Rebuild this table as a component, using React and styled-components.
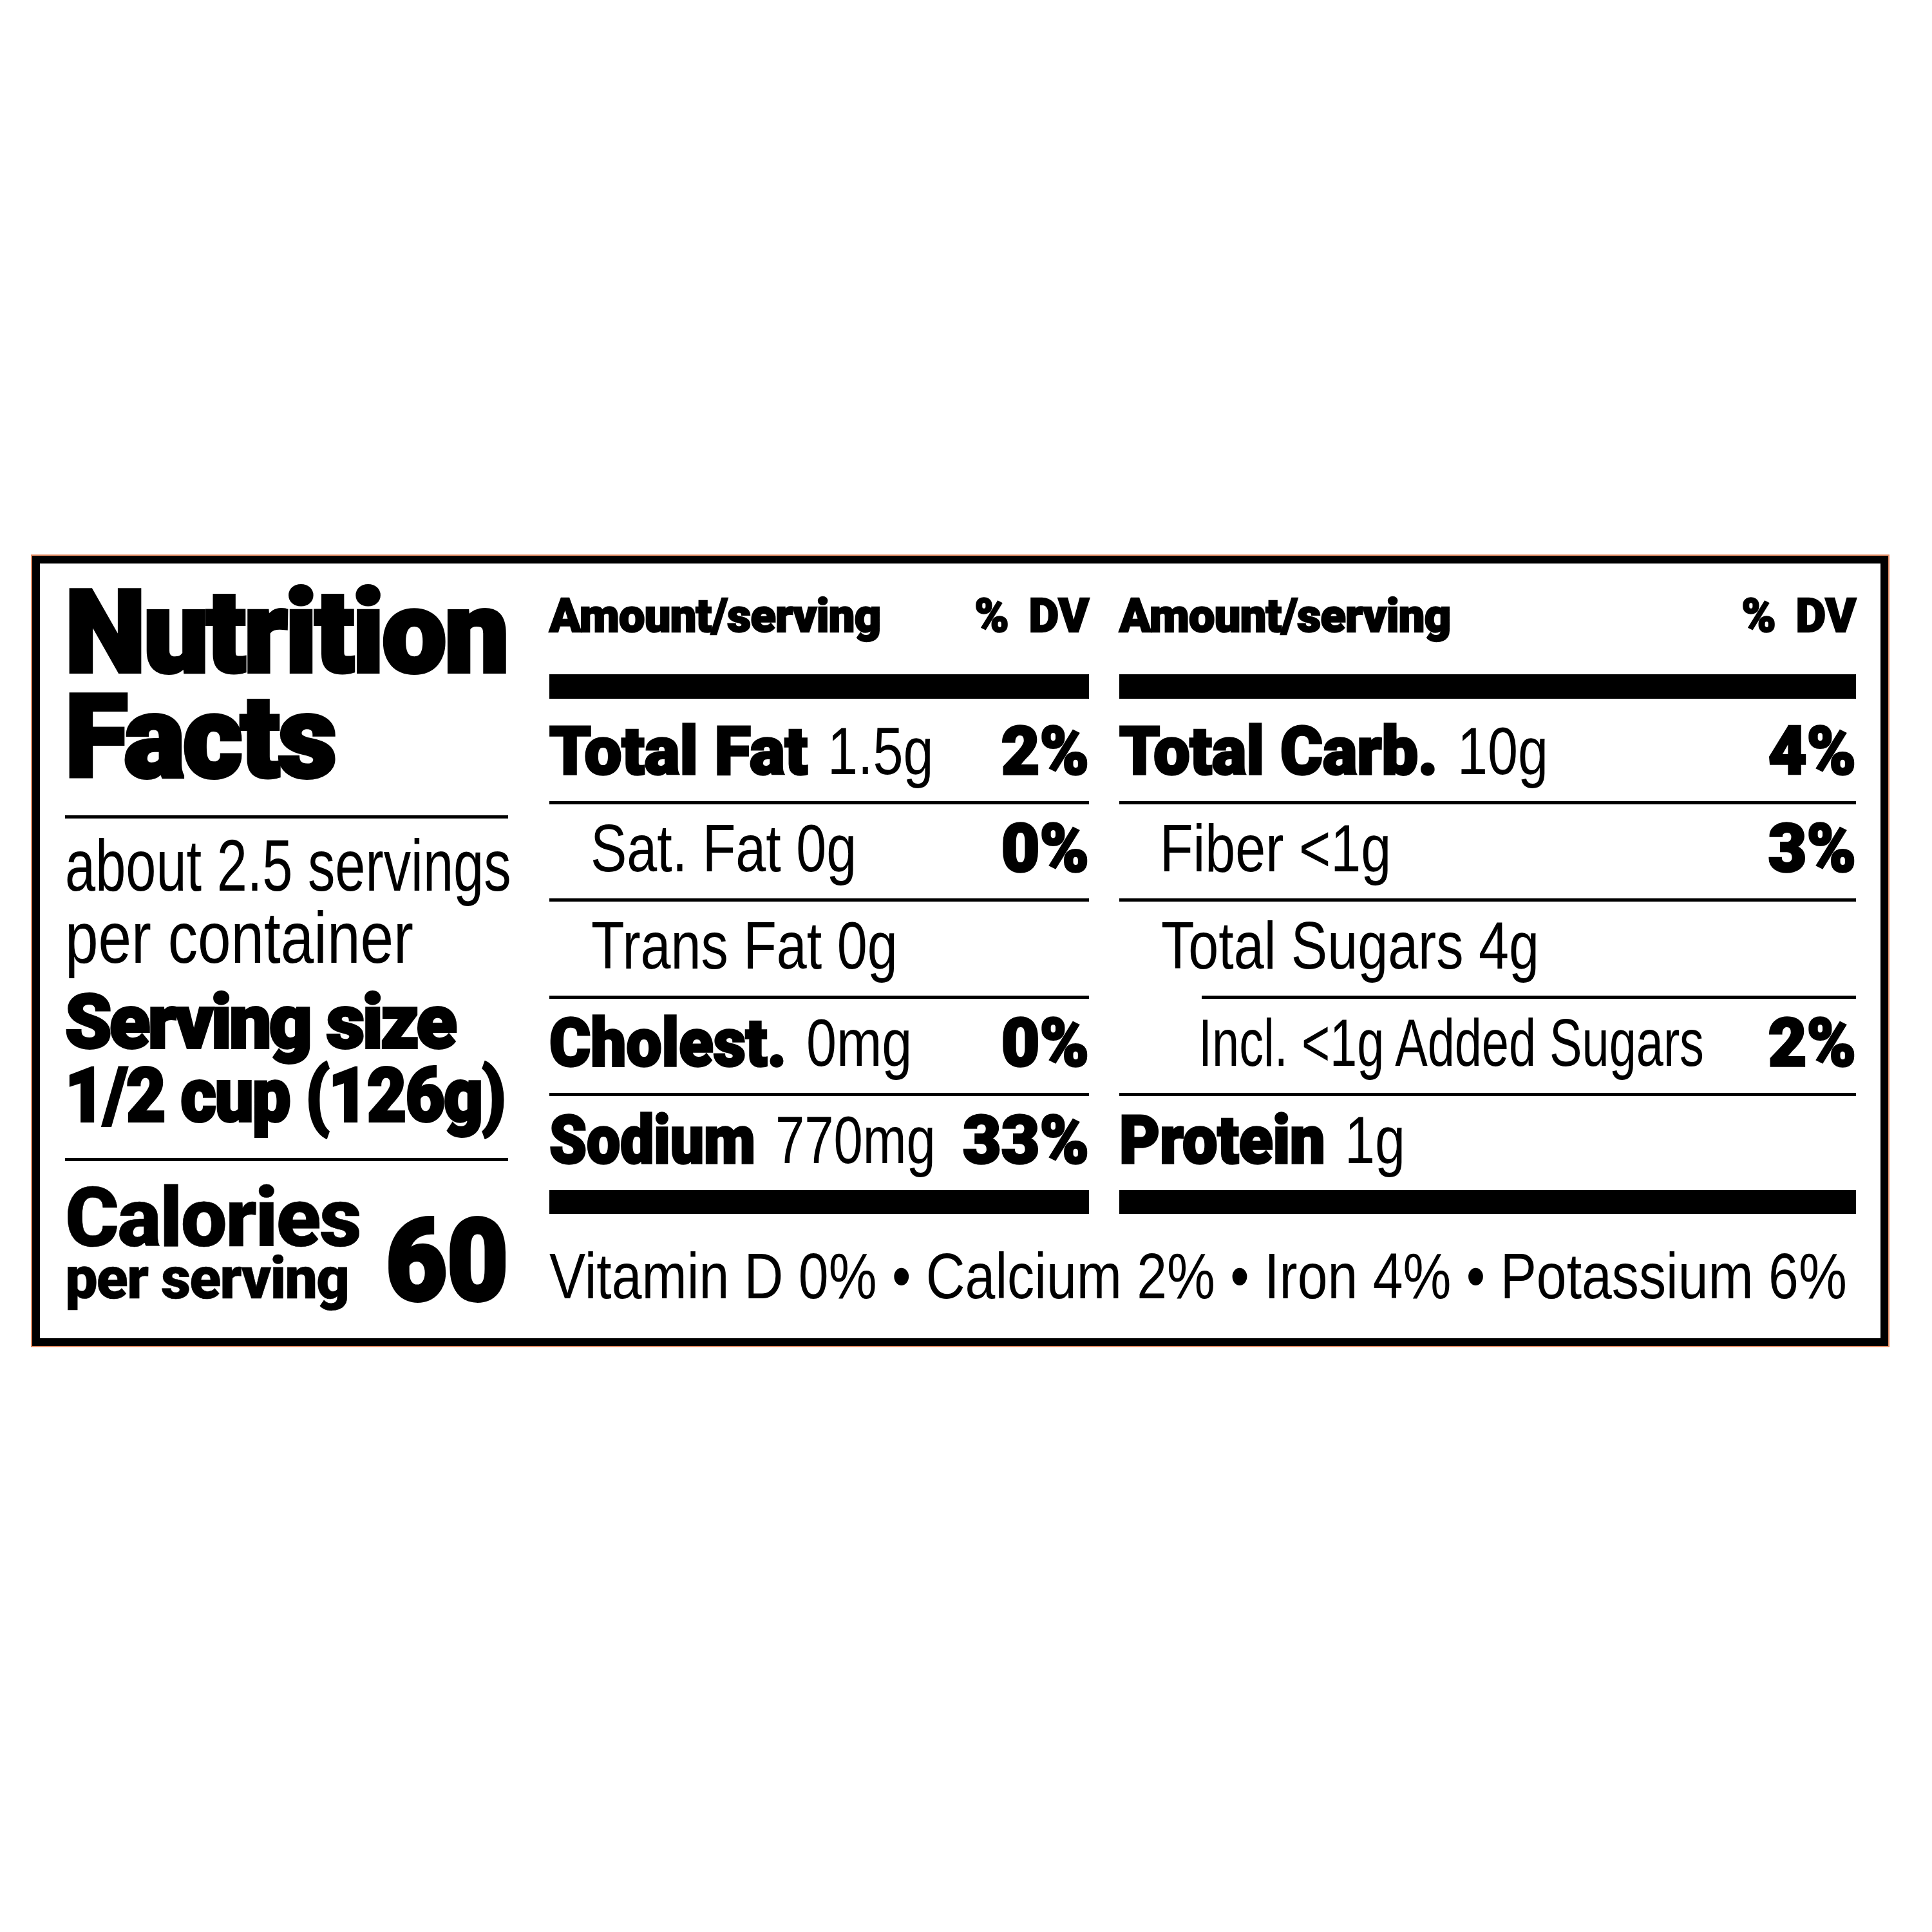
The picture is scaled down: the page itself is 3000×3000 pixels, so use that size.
import React from "react";
import styled, { createGlobalStyle, css } from "styled-components";

const BOLD = `"Roboto", "Liberation Sans", Arial, sans-serif`;
const REG = `"Liberation Sans", Arial, sans-serif`;

const heavy = css`
  font-family: ${BOLD};
  font-weight: 900;
  -webkit-text-stroke: 0.034em #000;
`;

const Global = createGlobalStyle`
  html, body { margin: 0; padding: 0; background: #fff; }
  body { font-family: ${REG}; color: #000; }
`;

const Page = styled.div`
  width: 3000px;
  min-height: 3000px;
  box-sizing: border-box;
  padding: 863px 0 0 50px;
`;

const Label = styled.section`
  box-sizing: border-box;
  width: 2882px;
  border: 12px solid #000;
  box-shadow: 0 0 0 2px #e38c64;
  padding: 24px 38px 0 39px;
  display: flex;
  gap: 64px;
  background: #fff;
`;

const LeftCol = styled.div`
  width: 688px;
  flex: none;
  display: flex;
  flex-direction: column;
`;

const Line = styled.span`
  display: block;
  letter-spacing: ${(p) => p.$ls || 0}px;
  transform: scaleX(${(p) => p.$sx || 1});
  transform-origin: left center;
`;

const Title = styled.h1`
  margin: 2px 0 0;
  ${heavy};
  font-size: 178px;
  line-height: 163px;
  white-space: nowrap;
`;

const Rule = styled.div`
  height: ${(p) => p.$h || 5}px;
  background: #000;
  margin-top: ${(p) => p.$top || 0}px;
  margin-left: ${(p) => p.$indent || 0}px;
  margin-bottom: ${(p) => p.$bottom || 0}px;
  flex: none;
`;

const Servings = styled.p`
  margin: 17px 0 0;
  font: 400 113px/112px ${REG};
  white-space: nowrap;
`;

const ServingSize = styled.p`
  margin: 18px 0 0;
  ${heavy};
  font-size: 116px;
  line-height: 114px;
  white-space: nowrap;
`;

const CaloriesRow = styled.div`
  display: flex;
  justify-content: space-between;
  align-items: flex-start;
`;

const CalStack = styled.div`
  display: flex;
  flex-direction: column;
  margin-top: 28px;
  ${heavy};
  white-space: nowrap;
`;

const CalWord = styled.span`
  font-size: 128px;
  line-height: 120px;
  letter-spacing: -2.5px;
`;

const PerServing = styled.span`
  font-size: 90px;
  line-height: 70px;
  letter-spacing: -1.8px;
`;

const CalNumber = styled.span`
  margin-top: 80px;
  ${heavy};
  font-size: 176px;
  line-height: 150px;
  transform: scaleX(0.93);
  transform-origin: right center;
`;

const RightArea = styled.div`
  width: 2029px;
  flex: none;
  display: flex;
  flex-direction: column;
`;

const Columns = styled.div`
  display: grid;
  grid-template-columns: 838px 1144px;
  column-gap: 47px;
`;

const Column = styled.div`
  display: flex;
  flex-direction: column;
`;

const Header = styled.div`
  display: flex;
  justify-content: space-between;
  align-items: baseline;
  ${heavy};
  font-size: 72px;
  line-height: 116px;
  white-space: nowrap;
`;

const HeaderAmount = styled.span`
  letter-spacing: -0.7px;
`;

const HeaderDV = styled.span`
  word-spacing: 0.18em;
`;

const Row = styled.div`
  display: flex;
  align-items: baseline;
  justify-content: space-between;
  padding: 0 0 9px ${(p) => p.$indent || 0}px;
  ${heavy};
  font-size: 103px;
  line-height: 137px;
  white-space: nowrap;
`;

const RowLabel = styled.span`
  flex: 1 1 0;
  min-width: 0;
`;

const Name = styled.span`
  display: inline-block;
  transform: scaleX(${(p) => p.$sx || 1});
  transform-origin: left center;
  margin-right: ${(p) => p.$mr || 0}px;
`;

const Cond = styled.span`
  display: inline-block;
  font-family: ${REG};
  font-weight: 400;
  -webkit-text-stroke-width: 0;
  transform: scaleX(${(p) => p.$sx || 0.82});
  transform-origin: left center;
  margin-left: ${(p) => p.$gap || 0};
`;

const Pct = styled.span`
  flex: none;
`;

const Vitamins = styled.p`
  margin: 0;
  font: 400 100.6px/193px ${REG};
  white-space: nowrap;
  transform: scaleX(0.837);
  transform-origin: left center;
`;

const midRows = [
  { name: "Total Fat", amt: "1.5g", pct: "2%" },
  { text: "Sat. Fat 0g", pct: "0%", indent: 64 },
  { text: "Trans Fat 0g", indent: 65 },
  { name: "Cholest.", sx: 0.95, mr: -19, amt: "0mg", pct: "0%" },
  { name: "Sodium", sx: 0.9, mr: -35, amt: "770mg", asx: 0.79, pct: "33%" },
];

const rightRows = [
  { name: "Total Carb.", sx: 0.975, mr: -13, amt: "10g", pct: "4%" },
  { text: "Fiber <1g", pct: "3%", indent: 63 },
  { text: "Total Sugars 4g", indent: 65, ruleIndent: 128 },
  { text: "Incl. <1g Added Sugars", sx: 0.735, pct: "2%", indent: 123 },
  { name: "Protein", sx: 0.94, mr: -21, amt: "1g" },
];

function NutrientColumn({ rows }) {
  return (
    <Column>
      <Header>
        <HeaderAmount>Amount/serving</HeaderAmount>
        <HeaderDV>% DV</HeaderDV>
      </Header>
      <Rule $h={38} $top={32} $bottom={13} />
      {rows.map((r, i) => (
        <React.Fragment key={i}>
          <Row $indent={r.indent}>
            <RowLabel>
              {r.name ? (
                <>
                  <Name $sx={r.sx} $mr={r.mr}>
                    {r.name}
                  </Name>
                  <Cond $gap="0.3em" $sx={r.asx}>
                    {r.amt}
                  </Cond>
                </>
              ) : (
                <Cond $sx={r.sx}>{r.text}</Cond>
              )}
            </RowLabel>
            {r.pct && <Pct>{r.pct}</Pct>}
          </Row>
          {i < rows.length - 1 && <Rule $h={5} $indent={r.ruleIndent} />}
        </React.Fragment>
      ))}
      <Rule $h={37} />
    </Column>
  );
}

export default function App() {
  return (
    <Page>
      <Global />
      <Label>
        <LeftCol>
          <Title>
            <Line $ls={-3}>Nutrition</Line>
            <Line $ls={-3}>Facts</Line>
          </Title>
          <Rule $h={5} $top={39} />
          <Servings>
            <Line $sx={0.75}>about 2.5 servings</Line>
            <Line $sx={0.82}>per container</Line>
          </Servings>
          <ServingSize>
            <Line $ls={-3.5}>Serving size</Line>
            <Line $ls={-2} $sx={0.915}>
              1/2 cup (126g)
            </Line>
          </ServingSize>
          <Rule $h={5} $top={40} />
          <CaloriesRow>
            <CalStack>
              <CalWord>Calories</CalWord>
              <PerServing>per serving</PerServing>
            </CalStack>
            <CalNumber>60</CalNumber>
          </CaloriesRow>
        </LeftCol>
        <RightArea>
          <Columns>
            <NutrientColumn rows={midRows} />
            <NutrientColumn rows={rightRows} />
          </Columns>
          <Vitamins>
            Vitamin D 0% • Calcium 2% • Iron 4% • Potassium 6%
          </Vitamins>
        </RightArea>
      </Label>
    </Page>
  );
}
